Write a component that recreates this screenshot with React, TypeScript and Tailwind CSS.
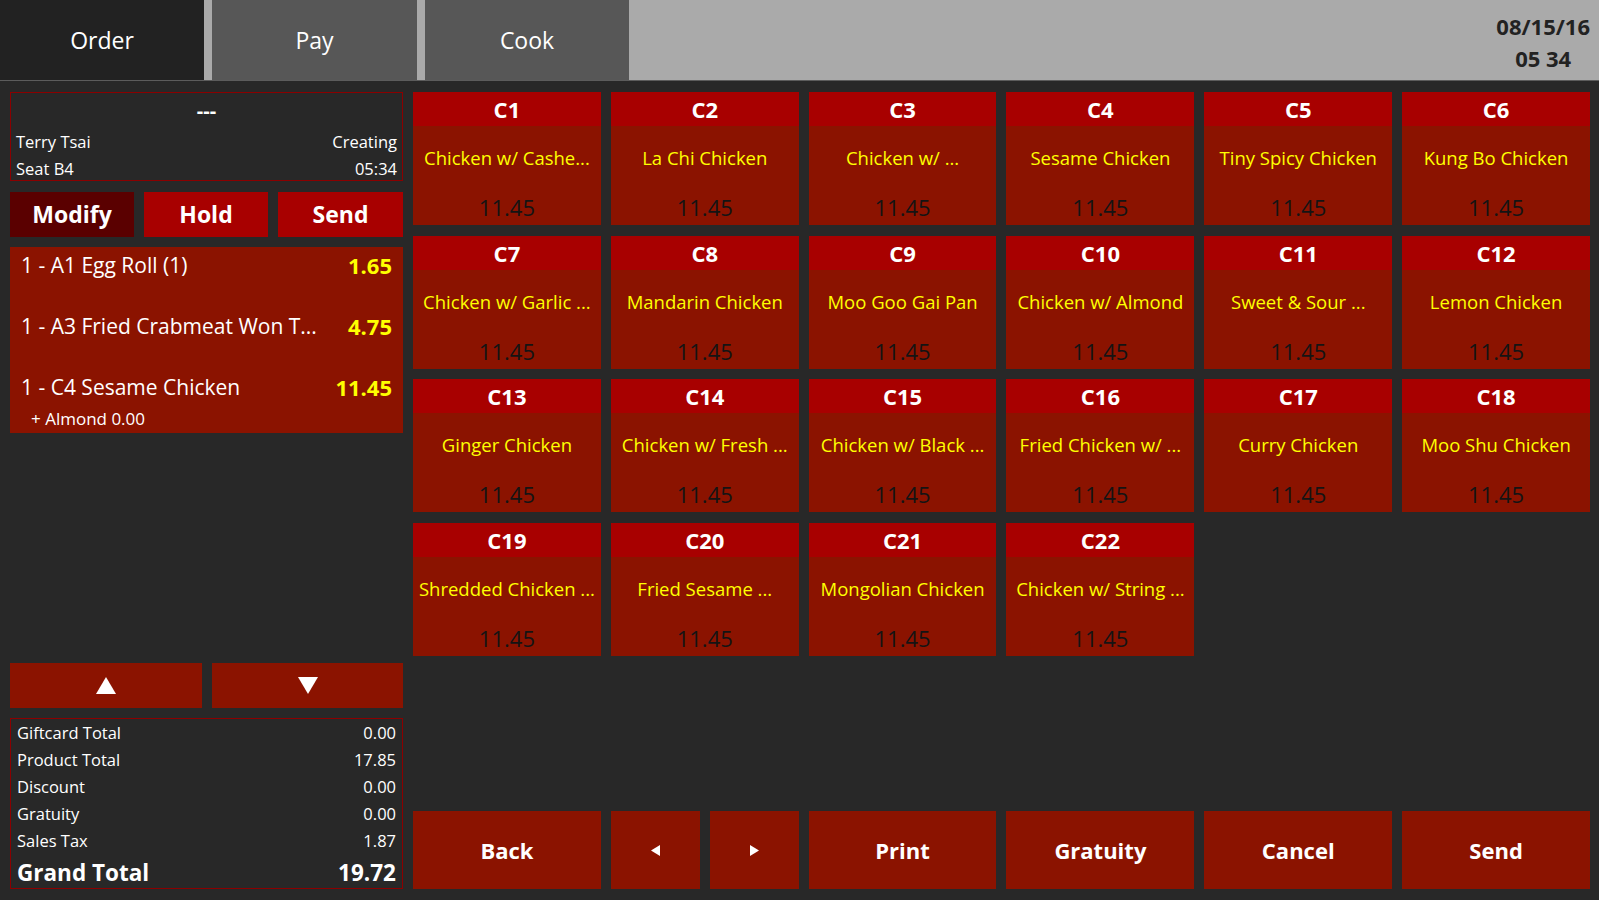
import React from "react";

const tiles: [string, string][] = [
  ["C1", "Chicken w/ Cashe..."],
  ["C2", "La Chi Chicken"],
  ["C3", "Chicken w/ ..."],
  ["C4", "Sesame Chicken"],
  ["C5", "Tiny Spicy Chicken"],
  ["C6", "Kung Bo Chicken"],
  ["C7", "Chicken w/ Garlic ..."],
  ["C8", "Mandarin Chicken"],
  ["C9", "Moo Goo Gai Pan"],
  ["C10", "Chicken w/ Almond"],
  ["C11", "Sweet & Sour ..."],
  ["C12", "Lemon Chicken"],
  ["C13", "Ginger Chicken"],
  ["C14", "Chicken w/ Fresh ..."],
  ["C15", "Chicken w/ Black ..."],
  ["C16", "Fried Chicken w/ ..."],
  ["C17", "Curry Chicken"],
  ["C18", "Moo Shu Chicken"],
  ["C19", "Shredded Chicken ..."],
  ["C20", "Fried Sesame ..."],
  ["C21", "Mongolian Chicken"],
  ["C22", "Chicken w/ String ..."],
];

const totals: [string, string][] = [
  ["Giftcard Total", "0.00"],
  ["Product Total", "17.85"],
  ["Discount", "0.00"],
  ["Gratuity", "0.00"],
  ["Sales Tax", "1.87"],
];

function Tile({ code, name }: { code: string; name: string }) {
  return (
    <div className="h-[133px] flex flex-col">
      <div className="h-[34px] bg-[#a80000] flex items-center justify-center text-white font-bold text-[22px] leading-none">
        {code}
      </div>
      <div className="flex-1 bg-[#8b1300] flex flex-col items-center">
        <div className="mt-[20px] h-[24px] leading-[24px] text-[18.5px] text-[#ffff00] whitespace-nowrap">{name}</div>
        <div className="mt-[23px] h-[28px] leading-[28px] text-[22px] text-[#141414]">11.45</div>
      </div>
    </div>
  );
}

function BottomBtn({ children }: { children: React.ReactNode }) {
  return (
    <div className="h-full bg-[#8b1300] flex items-center justify-center text-white font-bold text-[22px]">
      {children}
    </div>
  );
}

export default function App() {
  return (
    <div
      className="w-[1599px] h-[900px] bg-[#282828] flex flex-col overflow-hidden"
      style={{ fontFamily: '"Open Sans", "Noto Sans", sans-serif' }}
    >
      {/* Header */}
      <div className="h-[81px] shrink-0 bg-[#aaaaaa] border-b border-[#5c5c5c] flex gap-[8px]">
        <div className="w-[204px] bg-[#222222] flex items-center justify-center text-white text-[23px]">Order</div>
        <div className="w-[205px] bg-[#575757] flex items-center justify-center text-white text-[23px]">Pay</div>
        <div className="w-[204px] bg-[#575757] flex items-center justify-center text-white text-[23px]">Cook</div>
        <div className="ml-auto pr-[9px] pt-[10px] flex flex-col items-center text-[#222222] font-bold text-[22px] leading-[32px]">
          <div>08/15/16</div>
          <div>05 34</div>
        </div>
      </div>

      {/* Main */}
      <div className="flex-1 flex gap-[10px] pl-[10px] pr-[9px] pt-[11px] pb-[11px]">
        {/* Left panel */}
        <div className="w-[393px] shrink-0 flex flex-col">
          <div className="h-[89px] border border-[#8b0000] px-[5px] pt-[4px] text-white text-[16.5px]">
            <div className="h-[28px] leading-[28px] text-center font-bold text-[20px]">---</div>
            <div className="mt-[3px] flex justify-between leading-[27px]">
              <span>Terry Tsai</span>
              <span>Creating</span>
            </div>
            <div className="flex justify-between leading-[27px]">
              <span>Seat B4</span>
              <span>05:34</span>
            </div>
          </div>

          <div className="mt-[11px] h-[45px] flex gap-[10px]">
            <div className="w-[124px] bg-[#5a0000] flex items-center justify-center text-white font-bold text-[23px]">Modify</div>
            <div className="w-[124px] bg-[#a80000] flex items-center justify-center text-white font-bold text-[23px]">Hold</div>
            <div className="flex-1 bg-[#a80000] flex items-center justify-center text-white font-bold text-[23px]">Send</div>
          </div>

          <div className="mt-[10px] h-[186px] bg-[#8b1300] pl-[11px] pr-[11px] text-white">
            <div className="h-[61px] flex justify-between leading-[36px]">
              <span className="text-[21px]">1 - A1 Egg Roll (1)</span>
              <span className="text-[22px] font-bold text-[#ffff00]">1.65</span>
            </div>
            <div className="h-[61px] flex justify-between leading-[36px]">
              <span className="text-[21px]">1 - A3 Fried Crabmeat Won T...</span>
              <span className="text-[22px] font-bold text-[#ffff00]">4.75</span>
            </div>
            <div className="flex justify-between leading-[36px]">
              <span className="text-[21px]">1 - C4 Sesame Chicken</span>
              <span className="text-[22px] font-bold text-[#ffff00]">11.45</span>
            </div>
            <div className="mt-[2px] pl-[10px] leading-[24px] text-[17px]">+ Almond 0.00</div>
          </div>

          <div className="flex-1" />

          <div className="h-[45px] flex gap-[10px]">
            <div className="w-[192px] bg-[#8b1300] flex items-center justify-center">
              <svg width="20" height="17" viewBox="0 0 20 17">
                <polygon points="10,0 20,17 0,17" fill="#ffffff" />
              </svg>
            </div>
            <div className="flex-1 bg-[#8b1300] flex items-center justify-center">
              <svg width="20" height="17" viewBox="0 0 20 17">
                <polygon points="0,0 20,0 10,17" fill="#ffffff" />
              </svg>
            </div>
          </div>

          <div className="mt-[10px] h-[171px] border border-[#8b0000] px-[6px] text-white text-[16.5px] overflow-hidden">
            {totals.map(([k, v]) => (
              <div key={k} className="flex justify-between leading-[27px] h-[27px]">
                <span>{k}</span>
                <span>{v}</span>
              </div>
            ))}
            <div className="flex justify-between leading-[37px] font-bold text-[22.5px]">
              <span>Grand Total</span>
              <span>19.72</span>
            </div>
          </div>
        </div>

        {/* Right panel */}
        <div className="flex-1 flex flex-col justify-between">
          <div className="grid grid-cols-6 gap-x-[10px] gap-y-[10.5px]">
            {tiles.map(([c, n]) => (
              <Tile key={c} code={c} name={n} />
            ))}
          </div>

          <div className="h-[78px] grid grid-cols-6 gap-[10px]">
            <BottomBtn>Back</BottomBtn>
            <div className="flex gap-[10px]">
              <div className="flex-1 bg-[#8b1300] flex items-center justify-center">
                <svg width="9" height="11" viewBox="0 0 9 11">
                  <polygon points="9,0 9,11 0,5.5" fill="#ffffff" />
                </svg>
              </div>
              <div className="flex-1 bg-[#8b1300] flex items-center justify-center">
                <svg width="9" height="11" viewBox="0 0 9 11">
                  <polygon points="0,0 9,5.5 0,11" fill="#ffffff" />
                </svg>
              </div>
            </div>
            <BottomBtn>Print</BottomBtn>
            <BottomBtn>Gratuity</BottomBtn>
            <BottomBtn>Cancel</BottomBtn>
            <BottomBtn>Send</BottomBtn>
          </div>
        </div>
      </div>
    </div>
  );
}
